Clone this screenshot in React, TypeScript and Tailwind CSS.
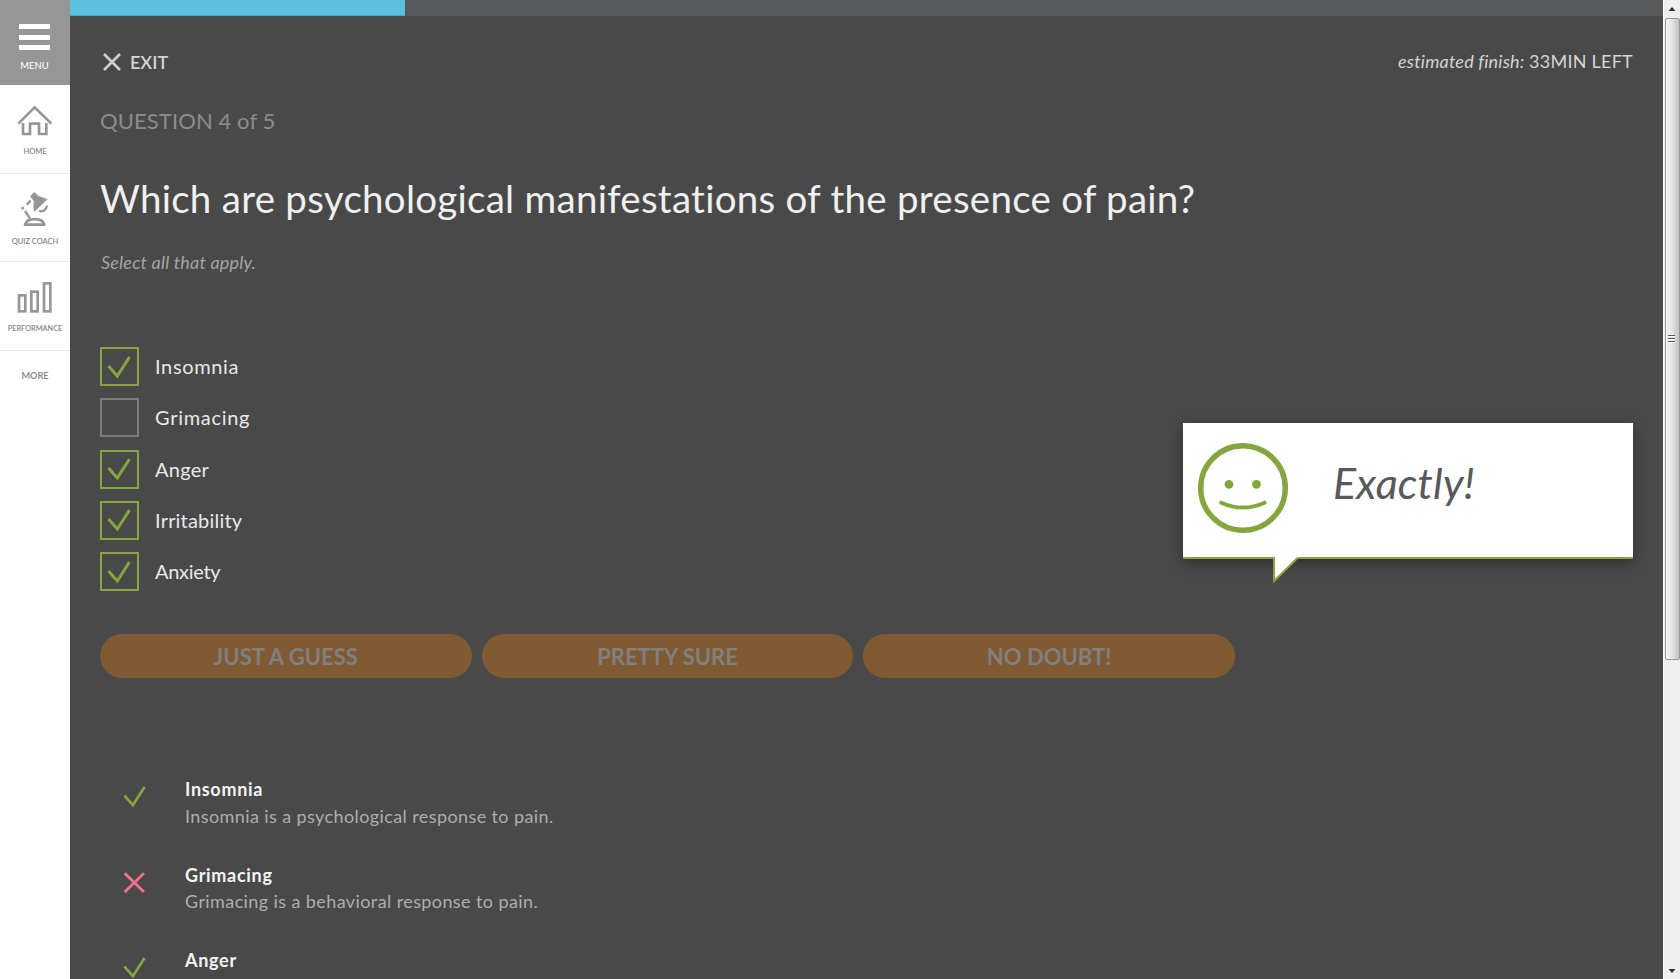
import type { ReactNode } from "react";

const options = [
  { label: "Insomnia", checked: true, tracking: "tracking-[0.650px]" },
  { label: "Grimacing", checked: false, tracking: "tracking-[0.700px]" },
  { label: "Anger", checked: true, tracking: "tracking-[0.250px]" },
  { label: "Irritability", checked: true, tracking: "tracking-[0.200px]" },
  { label: "Anxiety", checked: true, tracking: "tracking-[-0.300px]" },
];

const confidence = ["JUST A GUESS", "PRETTY SURE", "NO DOUBT!"];

const rationales = [
  { label: "Insomnia", text: "Insomnia is a psychological response to pain.", correct: true },
  { label: "Grimacing", text: "Grimacing is a behavioral response to pain.", correct: false },
  { label: "Anger", text: "Anger is a psychological response to pain.", correct: true },
];

function HomeIcon() {
  return (
    <svg className="h-8 w-9" viewBox="52 70 108 96" fill="none" stroke="#969696" strokeWidth="8">
      <path d="M56 129 105 80 155 129" />
      <path d="M70 127V160H91V129H118V160H140V127" />
    </svg>
  );
}

function LampIcon() {
  return (
    <svg className="size-9" viewBox="52 330 108 108" fill="none" stroke="#969696">
      <path d="M104 333 117 345 144 355 103 393 101 376 103 361 91 346Z" fill="#969696" stroke="none" />
      <path d="M142 374A19 19 0 0 1 118 390" strokeWidth="7" />
      <path d="M93 359 81 371M76 390 91 412" strokeWidth="7" />
      <circle cx="69" cy="381" r="4.5" fill="#969696" stroke="none" />
      <path d="M76 431C82 409 128 409 134 431Z" strokeWidth="8" strokeLinejoin="round" />
    </svg>
  );
}

function BarsIcon() {
  return (
    <svg className="h-8 w-9" viewBox="52 600 108 96" fill="none" stroke="#969696" strokeWidth="8">
      <rect x="58" y="643" width="19" height="48" />
      <rect x="95" y="632" width="19" height="59" />
      <rect x="133" y="607" width="19" height="84" />
    </svg>
  );
}

function Check({ className, width }: { className: string; width: number }) {
  return (
    <svg className={className} viewBox="0 0 24 24" fill="none" stroke="#85a63e" strokeWidth={width}>
      <path d="M1.500 11 10.300 21 22.500 2" />
    </svg>
  );
}

function NavItem({ icon, label, labelClass }: { icon: ReactNode; label: string; labelClass: string }) {
  return (
    <a className="flex h-[88.600px] flex-col items-center border-b border-[#e8e8e8] pt-[19px]">
      {icon}
      <span className={labelClass}>{label}</span>
    </a>
  );
}

function Sidebar() {
  return (
    <nav className="flex w-[70px] shrink-0 flex-col bg-white text-[#858585]">
      <button className="flex h-[85px] flex-col items-center bg-[#969696] pt-6">
        <span className="flex w-[31px] -translate-x-px flex-col gap-[5.500px]">
          <span className="h-[5px] bg-white" />
          <span className="h-[5px] bg-white" />
          <span className="h-[5px] bg-white" />
        </span>
        <span className="mt-[10px] pr-px text-[9.500px] leading-3 text-white">MENU</span>
      </button>
      <NavItem icon={<HomeIcon />} label="HOME" labelClass="mt-[10px] text-[7.500px] font-semibold leading-3" />
      <NavItem
        icon={<span className="-mt-0.5 flex"><LampIcon /></span>}
        label="QUIZ COACH"
        labelClass="mt-[9px] text-[7.500px] font-semibold leading-3"
      />
      <NavItem icon={<BarsIcon />} label="PERFORMANCE" labelClass="mt-[10px] text-[7.300px] font-semibold leading-3" />
      <span className="mt-[19px] text-center text-[9.200px] font-semibold leading-3">MORE</span>
    </nav>
  );
}

function Feedback() {
  return (
    <aside className="absolute right-[30px] top-[423px] flex h-[136px] w-[450px] border-b-2 border-[#85a63e] bg-white shadow-[0_4px_12px_rgba(0,0,0,0.4)]">
      <svg className="ml-[13.500px] mt-[18.500px] size-[92px]" viewBox="0 0 92 92" fill="none" stroke="#85a63e">
        <circle cx="46" cy="46" r="42.300" strokeWidth="5.500" />
        <circle cx="32" cy="42.300" r="4.400" fill="#85a63e" stroke="none" />
        <circle cx="59.500" cy="42.300" r="4.400" fill="#85a63e" stroke="none" />
        <path d="M24.300 60.700Q46 70.500 67.500 60.700" strokeWidth="4" strokeLinecap="round" />
      </svg>
      <p className="ml-[44.500px] mt-[34px] text-[43px] italic leading-[52px] tracking-[0.200px] text-[#58595b]">Exactly!</p>
      <svg className="absolute left-[90px] top-[133px] h-7 w-[26px]" viewBox="0 0 26 28">
        <path d="M1 0H25V1L1 25Z" fill="#fff" />
        <path d="M1 1V25L24.500 2" fill="none" stroke="#85a63e" strokeWidth="2" />
      </svg>
    </aside>
  );
}

function Scrollbar() {
  return (
    <div className="flex w-[17px] shrink-0 flex-col items-center border-l border-white bg-[#efefef]">
      <svg className="h-[18px] w-4" viewBox="0 0 16 18">
        <path d="M4.500 11 8 7 11.500 11Z" fill="#333" />
      </svg>
      <div className="flex h-[642px] w-[15px] items-center justify-center rounded-[2px] border border-[#979797] bg-linear-to-r from-[#f5f5f5] via-[#e2e2e5] to-[#c2c2c7]">
        <div className="flex w-[7px] -translate-x-px flex-col gap-px">
          <span className="h-0.5 border-t border-[#555] bg-white" />
          <span className="h-0.5 border-t border-[#555] bg-white" />
          <span className="h-0.5 border-t border-[#555] bg-white" />
        </div>
      </div>
      <svg className="mt-auto h-[18px] w-4" viewBox="0 0 16 18">
        <path d="M4.500 8 8 12 11.500 8Z" fill="#333" />
      </svg>
    </div>
  );
}

export default function App() {
  return (
    <div className="flex h-[979px] w-[1680px] overflow-hidden bg-[#494949] font-[Lato,sans-serif]">
      <Sidebar />
      <main className="relative flex min-w-0 flex-1 flex-col overflow-hidden">
        <div className="flex h-4 shrink-0 bg-[#58595b]">
          <div className="w-[335px] border-b border-[#4ba9c6] bg-[#5bc0de]" />
        </div>

        <div className="px-[30px]">
          <header className="mt-[34px] flex h-6 items-center justify-between text-[18px] leading-6 text-[#d4d4d4]">
            <button className="flex items-center pl-[3px] font-semibold">
              <svg className="mr-[9px] size-[18px]" viewBox="0 0 18 18" fill="none" stroke="#d0d0d0" strokeWidth="2.600">
                <path d="M1 1 17 17M17 1 1 17" />
              </svg>
              EXIT
            </button>
            <p className="pb-0.5">
              <span className="italic tracking-[0.200px]">estimated finish:</span>{" "}
              <span className="tracking-[0.250px]">33MIN LEFT</span>
            </p>
          </header>

          <p className="mt-[33px] text-[22px] leading-7 tracking-[0.100px] text-[#8c8c8c]">QUESTION 4 of 5</p>
          <h1 className="mt-[39px] whitespace-nowrap text-[38.500px] leading-[48px] tracking-[0.270px] text-[#f0f0f0]">
            Which are psychological manifestations of the presence of pain?
          </h1>
          <p className="mt-7 pl-px text-[18px] italic leading-6 tracking-[0.200px] text-[#a5a5a5]">Select all that apply.</p>

          <ul className="mt-[73px] flex flex-col gap-[12.250px]">
            {options.map((o) => (
              <li key={o.label} className="flex h-[39px]">
                <span
                  className={
                    o.checked
                      ? "flex size-[39px] items-center justify-center border-2 border-[#85a63e]"
                      : "size-[39px] border-2 border-[#7b7b7b]"
                  }
                >
                  {o.checked && <Check className="size-6 -translate-x-px" width={3} />}
                </span>
                <span className={`ml-4 text-[20px] leading-[38.500px] text-[#e8e8e8] ${o.tracking}`}>{o.label}</span>
              </li>
            ))}
          </ul>

          <div className="mt-[43px] flex w-[1135px] gap-[10px]">
            {confidence.map((c) => (
              <button
                key={c}
                className="h-11 flex-1 rounded-[22px] bg-[#805a33] text-[22px] font-bold leading-[43px] text-[#808080]"
              >
                {c}
              </button>
            ))}
          </div>

          <ul className="mt-[98px] flex flex-col gap-[32.500px]">
            {rationales.map((r) => (
              <li key={r.label} className="flex h-[53px]">
                <span className="w-[85px] shrink-0 pl-[23px] pt-[9px]">
                  {r.correct ? (
                    <Check className="size-[23px]" width={2.800} />
                  ) : (
                    <svg className="mt-px size-[22px]" viewBox="0 0 22 22" fill="none" stroke="#f4708c" strokeWidth="2.900">
                      <path d="M1.700 1.200 21 20M21 1.200 1.700 20" />
                    </svg>
                  )}
                </span>
                <div className="text-[18px] leading-[26.500px]">
                  <h2 className="font-bold tracking-[0.700px] text-[#f4f4f4]">{r.label}</h2>
                  <p className="whitespace-nowrap tracking-[0.400px] text-[#adadad]">{r.text}</p>
                </div>
              </li>
            ))}
          </ul>
        </div>

        <Feedback />
      </main>
      <Scrollbar />
    </div>
  );
}
